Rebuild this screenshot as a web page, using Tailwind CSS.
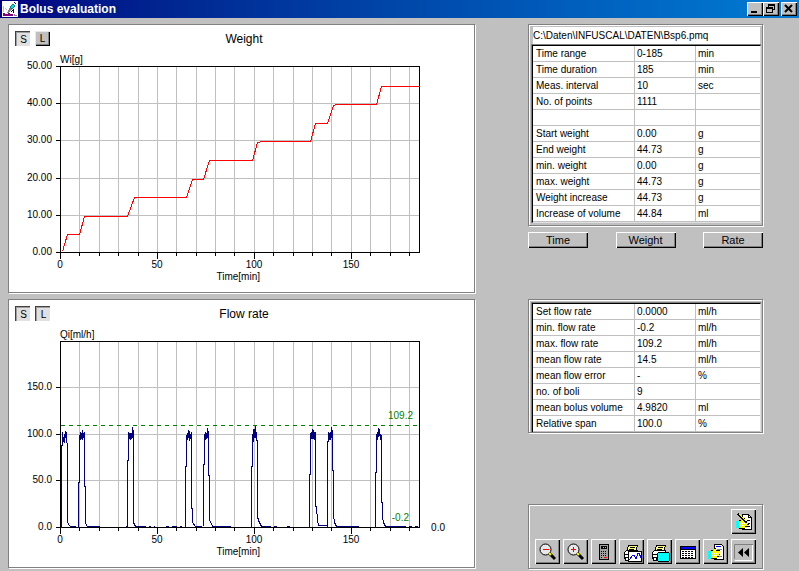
<!DOCTYPE html>
<html lang="en">
<head>
    <meta charset="UTF-8">
    <meta name="viewport" content="width=device-width, initial-scale=1.0">
    <title>Bolus evaluation</title>
    <script src="https://cdn.jsdelivr.net/npm/@tailwindcss/browser@4"></script>
</head>
<body class="bg-[#c0c0c0] min-h-screen flex flex-col text-black font-['Liberation_Sans',Arial,sans-serif]">

    <header class="h-[18px] pl-[2px] pr-[2px] flex items-center bg-linear-to-r from-[#000080] to-[#0a7cd4]">
        <svg class="w-4 h-4 shrink-0" viewBox="0 0 16 16" shape-rendering="crispEdges" aria-hidden="true">
            <rect width="16" height="16" fill="#fff"/>
            <path d="M1 12h2v1h3v-1h2v1h3v2H1z" fill="#800080"/>
            <path d="M1 5v6M3 7l2 2" stroke="#c0c0c0" fill="none"/>
            <path d="M5 12l3-6l2 2l-3 4z" fill="#808080"/>
            <path d="M8 6l3-3l2 2l-3 3z" fill="#00e0e0" stroke="#008080"/>
            <path d="M12 1l2 2M9 11l2-2v3" stroke="#000080" fill="none"/>
            <path d="M12 13h1v1h2v1h-3z" fill="#808080"/>
        </svg>
        <h1 class="flex-1 pl-[2px] text-[12px] leading-[16px] font-bold text-white">Bolus evaluation</h1>
        <div class="flex">
            <button type="button" aria-label="Minimize" class="w-4 h-[14px] bg-[#c0c0c0] shadow-[inset_1px_1px_#fff,inset_-1px_-1px_#000,inset_-2px_-2px_#808080]">
                <svg class="w-4 h-[14px] block" viewBox="0 0 16 14"><path d="M4 9h6v2H4z"/></svg>
            </button>
            <button type="button" aria-label="Restore" class="w-4 h-[14px] bg-[#c0c0c0] shadow-[inset_1px_1px_#fff,inset_-1px_-1px_#000,inset_-2px_-2px_#808080]">
                <svg class="w-4 h-[14px] block" viewBox="0 0 16 14" shape-rendering="crispEdges">
                    <path d="M5 2h7v2H5zM5 4h1v1H5zM11 4h1v4h-2V7h1z"/>
                    <path d="M3 5h7v2H3zM3 7h1v4H3zM9 7h1v4H9zM4 10h5v1H4z"/>
                </svg>
            </button>
            <button type="button" aria-label="Close" class="ml-[2px] w-4 h-[14px] bg-[#c0c0c0] shadow-[inset_1px_1px_#fff,inset_-1px_-1px_#000,inset_-2px_-2px_#808080]">
                <svg class="w-4 h-[14px] block" viewBox="0 0 16 14"><path d="M4 3l7 7M11 3l-7 7" stroke="#000" stroke-width="2"/></svg>
            </button>
        </div>
    </header>

    <main class="flex-1 flex items-start gap-[53px] pt-[6px] pl-2 pr-9 pb-[2px]">

        <!-- charts -->
        <div class="flex-1 min-w-0 flex flex-col gap-[6px]">
            <section class="bg-white border border-[#808080] shadow-[1px_1px_#fff]">
                <div class="h-[25px] pt-[6px] pl-[6px] flex items-start gap-[5px]">
                    <button type="button" class="w-[15px] h-[15px] pl-[2px] pt-[2px] text-[10px] leading-[13px] bg-[#e0e0e0] shadow-[inset_1px_1px_#404040,inset_2px_2px_#a0a0a0]">S</button>
                    <button type="button" class="w-[15px] h-[15px] text-[10px] leading-[13px] bg-[#c0c0c0] shadow-[inset_1px_1px_#e8e8e8,inset_-1px_-1px_#000,inset_-2px_-2px_#808080]">L</button>
                    <h2 class="flex-1 pr-[41px] text-center text-[12px] leading-[16px]">Weight</h2>
                </div>
                <svg class="w-full block" viewBox="0 0 465 242" font-size="10" role="img" aria-label="Weight over time">
                    <g fill="none" shape-rendering="crispEdges" transform="translate(.5 .5)">
                        <path stroke="#c0c0c0" d="M70 16V202M90 16V202M109 16V202M129 16V202M148 16V202M167 16V202M187 16V202M206 16V202M225 16V202M245 16V202M264 16V202M284 16V202M303 16V202M322 16V202M342 16V202M361 16V202M381 16V202M400 16V202M51 53H410M51 90H410M51 128H410M51 165H410"/>
                        <path stroke="#000" d="M51 16H410V202H51zM46 16H51M46 53H51M46 90H51M46 128H51M46 165H51M46 202H51M51 202v6M148 202v6M245 202v6M342 202v6M70 202v3M90 202v3M109 202v3M129 202v3M167 202v3M187 202v3M206 202v3M225 202v3M264 202v3M284 202v3M303 202v3M322 202v3M361 202v3M381 202v3M400 202v3"/>
                        <path stroke="#f00" d="M53 201L58 184H70L75 166H118L125 147H177L183 129H194L200 110H243L248 92L253 91H301L306 73H318L324 55L327 54H367L372 36H410"/>
                    </g>
                    <text x="51" y="13">Wi[g]</text>
                    <g text-anchor="end">
                        <text x="43" y="19">50.00</text>
                        <text x="43" y="56">40.00</text>
                        <text x="43" y="93">30.00</text>
                        <text x="43" y="131">20.00</text>
                        <text x="43" y="168">10.00</text>
                        <text x="43" y="205">0.00</text>
                        <text x="251" y="230">Time[min]</text>
                    </g>
                    <g text-anchor="middle">
                        <text x="51" y="218">0</text>
                        <text x="148" y="218">50</text>
                        <text x="245" y="218">100</text>
                        <text x="342" y="218">150</text>
                    </g>
                </svg>
            </section>

            <section class="bg-white border border-[#808080] shadow-[1px_1px_#fff]">
                <div class="h-[25px] pt-[6px] pl-[6px] flex items-start gap-[5px]">
                    <button type="button" class="w-[15px] h-[15px] pl-[2px] pt-[2px] text-[10px] leading-[13px] bg-[#e0e0e0] shadow-[inset_1px_1px_#404040,inset_2px_2px_#a0a0a0]">S</button>
                    <button type="button" class="w-[15px] h-[15px] pl-[2px] pt-[2px] text-[10px] leading-[13px] bg-[#e0e0e0] shadow-[inset_1px_1px_#404040,inset_2px_2px_#a0a0a0]">L</button>
                    <h2 class="flex-1 pr-[41px] text-center text-[12px] leading-[16px]">Flow rate</h2>
                </div>
                <svg class="w-full block" viewBox="0 0 465 242" font-size="10" role="img" aria-label="Flow rate over time">
                    <g fill="none" shape-rendering="crispEdges" transform="translate(.5 .5)">
                        <path stroke="#c0c0c0" d="M70 16V202M90 16V202M109 16V202M129 16V202M148 16V202M167 16V202M187 16V202M206 16V202M225 16V202M245 16V202M264 16V202M284 16V202M303 16V202M322 16V202M342 16V202M361 16V202M381 16V202M400 16V202M51 62H410M51 109H410M51 155H410"/>
                        <path stroke="#fff" d="M51 100H410"/>
                        <path stroke="#008000" stroke-dasharray="4 4" d="M51 100H410"/>
                        <path stroke="#000" d="M51 16H410V202H51zM46 62H51M46 109H51M46 155H51M46 202H51M51 202v6M148 202v6M245 202v6M342 202v6M70 202v3M90 202v3M109 202v3M129 202v3M167 202v3M187 202v3M206 202v3M225 202v3M264 202v3M284 202v3M303 202v3M322 202v3M361 202v3M381 202v3M400 202v3"/>
                        <!-- one sub-path per bolus -->
                        <g stroke="#000080">
                            <path d="M52 202V120H53V107L54 116L55 109V117L56 106V112L57 107V113L58 122V196L59 199L61 201H66"/>
                            <path d="M69 202V157H70V112L71 107V114L72 108V113L73 105V114L74 108V112L75 107V161H76V198L78 201H90"/>
                            <path d="M118 202V135H119V107L120 113V108L121 114V108L122 113V108L123 112V102L124 108V115V197L126 201H136"/>
                            <path d="M176 202V141H177V112L178 108V114L179 105V112L180 106V115L181 109V113L182 107V114V183H183V197L186 201H192"/>
                            <path d="M194 200V139H195V111L196 107V114L197 108V113L198 103V112L199 106V150H200V194L203 201H221"/>
                            <path d="M242 202V141H243V109L244 116V104L245 112V107L246 101V112L247 107V115H248V191L249 195L252 201H261"/>
                            <path d="M300 202V149H301V107V114L302 107V113L303 104V113L304 105V113L305 107V114L306 107V181H307L308 195L309 200H318"/>
                            <path d="M318 201V116H319V107L320 114V108L321 114V107L322 112V102L323 107V145H324V189L325 197L327 201H349"/>
                            <path d="M366 202V147H367V109L368 114V107L369 111V103L370 110V104L371 114V109L372 114V109V177H373V192L374 197L376 201H396"/>
                            <path d="M116 201h2M139 201h2M144 201h1M156 201h3M162 201h5M170 201h2M264 201h3M277 201h3M399 201h3M405 201h3"/>
                        </g>
                    </g>
                    <text x="51" y="13">Qi[ml/h]</text>
                    <g text-anchor="end">
                        <text x="43" y="65">150.0</text>
                        <text x="43" y="112">100.0</text>
                        <text x="43" y="158">50.0</text>
                        <text x="43" y="205">0.0</text>
                        <text x="436" y="206">0.0</text>
                        <text x="251" y="230">Time[min]</text>
                        <text x="404" y="94" fill="#008000">109.2</text>
                        <text x="400" y="196" fill="#008000">-0.2</text>
                    </g>
                    <g text-anchor="middle">
                        <text x="51" y="218">0</text>
                        <text x="148" y="218">50</text>
                        <text x="245" y="218">100</text>
                        <text x="342" y="218">150</text>
                    </g>
                </svg>
            </section>
        </div>

        <!-- results -->
        <aside class="w-[235px] shrink-0 flex flex-col">
            <section class="border border-[#808080] shadow-[1px_1px_#fff,inset_1px_1px_#fff] pt-[2px] pl-[2px] pr-px pb-[2px]">
                <input type="text" aria-label="Data file" value="C:\Daten\INFUSCAL\DATEN\Bsp6.pmq" class="block ml-[2px] w-[227px] h-[17px] bg-white text-[10px]">
                <div class="border-t border-l border-[#808080]">
                    <table class="w-full table-fixed border-separate border-spacing-0 bg-white border-t border-l border-t-black border-l-black border-r border-b border-r-[#e0e0e0] border-b-[#e0e0e0] text-[10px] leading-[15px] text-left [&_th]:font-normal [&_th]:w-[102px] [&_th]:pl-[3px] [&_td]:pl-[2px] [&_th]:border-r [&_td]:border-r [&_td:last-child]:border-r-0 [&_th]:border-b [&_td]:border-b [&_th]:border-[#c0c0c0] [&_td]:border-[#c0c0c0] [&_tr]:h-4">
                        <tr><th scope="row">Time range</th><td class="w-[61px]">0-185</td><td>min</td></tr>
                        <tr><th scope="row">Time duration</th><td>185</td><td>min</td></tr>
                        <tr><th scope="row">Meas. interval</th><td>10</td><td>sec</td></tr>
                        <tr><th scope="row">No. of points</th><td>1111</td><td></td></tr>
                        <tr><th></th><td></td><td></td></tr>
                        <tr><th scope="row">Start weight</th><td>0.00</td><td>g</td></tr>
                        <tr><th scope="row">End weight</th><td>44.73</td><td>g</td></tr>
                        <tr><th scope="row">min. weight</th><td>0.00</td><td>g</td></tr>
                        <tr><th scope="row">max. weight</th><td>44.73</td><td>g</td></tr>
                        <tr><th scope="row">Weight increase</th><td>44.73</td><td>g</td></tr>
                        <tr><th scope="row">Increase of volume</th><td>44.84</td><td>ml</td></tr>
                    </table>
                </div>
            </section>

            <div class="mt-[6px] flex justify-between text-[11px] leading-[16px]">
                <button type="button" class="w-[60px] h-4 bg-[#c0c0c0] shadow-[inset_1px_1px_#fff,inset_-1px_-1px_#000,inset_-2px_-2px_#808080]">Time</button>
                <button type="button" class="w-[60px] h-4 bg-[#c0c0c0] shadow-[inset_1px_1px_#fff,inset_-1px_-1px_#000,inset_-2px_-2px_#808080]">Weight</button>
                <button type="button" class="w-[60px] h-4 bg-[#c0c0c0] shadow-[inset_1px_1px_#fff,inset_-1px_-1px_#000,inset_-2px_-2px_#808080]">Rate</button>
            </div>

            <section class="mt-[51px] border border-[#808080] shadow-[1px_1px_#fff,inset_1px_1px_#fff] pt-[2px] pl-[2px] pr-px">
                <div class="border-t border-l border-[#808080]">
                    <table class="w-full table-fixed border-separate border-spacing-0 bg-white border-t border-l border-t-black border-l-black border-r border-r-[#e0e0e0] text-[10px] leading-[15px] text-left [&_th]:font-normal [&_th]:w-[102px] [&_th]:pl-[3px] [&_td]:pl-[2px] [&_th]:border-r [&_td]:border-r [&_td:last-child]:border-r-0 [&_th]:border-b [&_td]:border-b [&_th]:border-[#c0c0c0] [&_td]:border-[#c0c0c0] [&_tr]:h-4">
                        <tr><th scope="row">Set flow rate</th><td class="w-[61px]">0.0000</td><td>ml/h</td></tr>
                        <tr><th scope="row">min. flow rate</th><td>-0.2</td><td>ml/h</td></tr>
                        <tr><th scope="row">max. flow rate</th><td>109.2</td><td>ml/h</td></tr>
                        <tr><th scope="row">mean flow rate</th><td>14.5</td><td>ml/h</td></tr>
                        <tr><th scope="row">mean flow error</th><td>-</td><td>%</td></tr>
                        <tr><th scope="row">no. of boli</th><td>9</td><td></td></tr>
                        <tr><th scope="row">mean bolus volume</th><td>4.9820</td><td>ml</td></tr>
                        <tr><th scope="row">Relative span</th><td>100.0</td><td>%</td></tr>
                    </table>
                </div>
            </section>

            <!-- toolbar -->
            <section class="mt-[71px] border border-[#808080] shadow-[1px_1px_#fff,inset_1px_1px_#fff] px-[6px] py-1 flex flex-col gap-[5px] [&_button]:w-[25px] [&_button]:h-[25px] [&_button]:bg-[#c0c0c0] [&_button]:shadow-[inset_1px_1px_#fff,inset_-1px_-1px_#000,inset_-2px_-2px_#808080] [&_svg]:block [&_svg]:w-[25px] [&_svg]:h-[25px]">
                <div class="flex justify-end">
                    <button type="button" aria-label="Edit comment">
                        <svg viewBox="0 0 25 25" shape-rendering="crispEdges">
                            <path d="M11.500 5.500h6l3 3v12h-9z" fill="#fff" stroke="#000"/>
                            <path d="M17.500 5.500v3h3M16 11.500h3M17 14.500h2M15 17.500h4" fill="none" stroke="#000"/>
                            <path d="M5 12h3v7H5z" fill="#0ff"/>
                            <path d="M8 12h3v-2h3v2h3v3h-1v2h-2v2H8z" fill="#ff0"/>
                            <path d="M8 11.500h2M11 9.500h3M16 15.500h2M14 17.500h2M8 19.500h6" stroke="#000"/>
                            <path d="M9 14.500h5M9 16.500h4" stroke="#fff" stroke-dasharray="1 1"/>
                            <path d="M7 5l9 9" stroke="#000" stroke-width="2"/>
                            <path d="M8 5l7 7" stroke="#ff0"/>
                        </svg>
                    </button>
                </div>
                <div class="flex justify-between">
                    <button type="button" aria-label="Zoom out">
                        <svg viewBox="0 0 25 25">
                            <circle cx="10.500" cy="10.500" r="5.500" fill="#e8e8e8" stroke="#000"/>
                            <path d="M8 10.500h6" stroke="#f00"/>
                            <path d="M14 14l6 6" stroke="#000" stroke-width="3"/>
                            <path d="M14 14l2 2" stroke="#ff0" stroke-width="2"/>
                        </svg>
                    </button>
                    <button type="button" aria-label="Zoom in">
                        <svg viewBox="0 0 25 25">
                            <circle cx="10.500" cy="10.500" r="5.500" fill="#e8e8e8" stroke="#000"/>
                            <path d="M8 10.500h5M10.500 8v5" stroke="#f00"/>
                            <path d="M14 14l6 6" stroke="#000" stroke-width="3"/>
                            <path d="M14 14l2 2" stroke="#ff0" stroke-width="2"/>
                        </svg>
                    </button>
                    <button type="button" aria-label="Calculator">
                        <svg viewBox="0 0 25 25" shape-rendering="crispEdges">
                            <path d="M8.500 5.500h9v15h-9z" fill="#a0a0a0" stroke="#000"/>
                            <path d="M10 7h6v3h-6z"/>
                            <path d="M12 8h1v1h-1zM14 8h1v1h-1z" fill="#0ff"/>
                            <path d="M10 12.500h6M10 14.500h6M10 16.500h6M10 18.500h2" stroke="#000" stroke-dasharray="1 1"/>
                            <path d="M13 18.500h3" stroke="#f00"/>
                        </svg>
                    </button>
                    <button type="button" aria-label="Print chart">
                        <svg viewBox="0 0 25 25" shape-rendering="crispEdges">
                            <path d="M9.500 6.500h9l-2 7h-9z" fill="#ff8" stroke="#000"/>
                            <path d="M11 8.500h5M10 10.500h5" stroke="#000"/>
                            <path d="M5.500 13.500l2-2h11v7h-9v3h-3v-2h-1z" fill="#fff" stroke="#000"/>
                            <path d="M5 15.500h4M6 18.500h3" stroke="#000"/>
                            <path d="M9.500 12.500h13v10h-13z" fill="#fff" stroke="#000"/>
                            <path d="M10 20h1l3-4h1l2 4l2-6h1l2 5" fill="none" stroke="#00f"/>
                        </svg>
                    </button>
                    <button type="button" aria-label="Print screen">
                        <svg viewBox="0 0 25 25" shape-rendering="crispEdges">
                            <path d="M9.500 6.500h9l-2 7h-9z" fill="#ff8" stroke="#000"/>
                            <path d="M11 8.500h5M10 10.500h5" stroke="#000"/>
                            <path d="M5.500 13.500l2-2h11v7h-9v3h-3v-2h-1z" fill="#fff" stroke="#000"/>
                            <path d="M5 15.500h5M6 18.500h4" stroke="#000"/>
                            <path d="M11.500 13.500h10l1 1v7l-1 1h-10l-1-1v-7z" fill="#0ff" stroke="#000"/>
                        </svg>
                    </button>
                    <button type="button" aria-label="Table">
                        <svg viewBox="0 0 25 25" shape-rendering="crispEdges">
                            <path d="M5.500 7.500h15v12h-15z" fill="#fff" stroke="#000"/>
                            <path d="M6 8h14v2H6z" fill="#00f"/>
                            <path d="M6 10.500h14" stroke="#000"/>
                            <path d="M7 12.500h12M7 14.500h12M7 16.500h12M7 18.500h12" stroke="#000" stroke-dasharray="2 1"/>
                        </svg>
                    </button>
                    <button type="button" aria-label="Report">
                        <svg viewBox="0 0 25 25" shape-rendering="crispEdges">
                            <path d="M11.500 5.500h7l2 2v13h-9z" fill="#fff" stroke="#000"/>
                            <path d="M13 7.500h5" stroke="#00f"/>
                            <path d="M14 10.500h5M15 17.500h4" stroke="#808080"/>
                            <path d="M5 12h3v8H5z" fill="#0ff"/>
                            <path d="M8 12h3v-2h2v2h4v3h-1v2h-2v2H8z" fill="#ff0"/>
                            <path d="M8 11.500h2M11 9.500h2M13 11.500h4M16 15.500h1M14 17.500h2M8 19.500h6" stroke="#000"/>
                            <path d="M9 14.500h6M9 16.500h5" stroke="#fff" stroke-dasharray="1 1"/>
                        </svg>
                    </button>
                    <button type="button" aria-label="Back">
                        <svg viewBox="0 0 25 25">
                            <path d="M3.500 20V5.500H22" fill="none" stroke="#808080"/>
                            <path d="M4 21.500H21.500V6" fill="none" stroke="#fff"/>
                            <path d="M12 9v9l-5-4.500zM18 9v9l-5-4.500z"/>
                        </svg>
                    </button>
                </div>
            </section>
        </aside>
    </main>

</body>
</html>
